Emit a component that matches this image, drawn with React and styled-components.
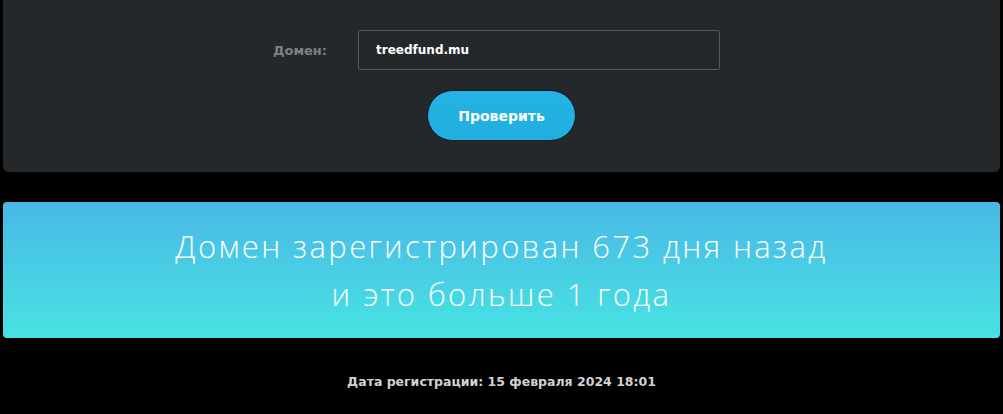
import React from 'react';
import styled, { createGlobalStyle } from 'styled-components';

const GlobalStyle = createGlobalStyle`
  html, body {
    margin: 0;
    padding: 0;
    background: #000;
    font-family: "DejaVu Sans", "Noto Sans", sans-serif;
  }
`;

const Page = styled.div`
  padding: 0 3px;
`;

const CheckPanel = styled.div`
  background: #25282b;
  border-radius: 0 0 6px 6px;
  padding: 30px 0 31px;
  display: flex;
  flex-direction: column;
  align-items: center;
  gap: 20px;
`;

const FieldRow = styled.div`
  display: flex;
  align-items: center;
  gap: 31px;
  padding-right: 10px;
`;

const Label = styled.label`
  color: #7b8087;
  font-size: 13px;
  font-weight: 600;
`;

const DomainInput = styled.input`
  box-sizing: border-box;
  width: 362px;
  height: 40px;
  background: #25282b;
  border: 1px solid #56595c;
  border-radius: 2px;
  padding: 0 17px;
  color: #fff;
  font-family: inherit;
  font-size: 12px;
  font-weight: 700;
  outline: none;
`;

const CheckButton = styled.button`
  width: 149px;
  height: 51px;
  border-radius: 26px;
  border: 1px solid #0c1822;
  background: linear-gradient(180deg, #25b2e4 0%, #20b0e0 100%);
  color: #fff;
  font-family: inherit;
  font-size: 14px;
  font-weight: 700;
  cursor: pointer;
`;

const ResultCard = styled.div`
  margin-top: 30px;
  height: 136px;
  border-radius: 4px;
  background: linear-gradient(180deg, #4ab8e6 0%, #47e3e2 100%);
  display: flex;
  flex-direction: column;
  align-items: center;
  justify-content: center;
  color: #fff;
  font-family: "Open Sans", "DejaVu Sans", sans-serif;
  font-size: 31px;
  font-weight: 300;
  letter-spacing: 2.4px;
  line-height: 48px;
`;

const DateLine = styled.div`
  text-align: center;
  color: #d2d2d2;
  font-size: 12.5px;
  font-weight: 700;
  margin-top: 36px;
`;

export default function App() {
  return (
    <Page>
      <GlobalStyle />
      <CheckPanel>
        <FieldRow>
          <Label>Домен:</Label>
          <DomainInput defaultValue="treedfund.mu" />
        </FieldRow>
        <CheckButton>Проверить</CheckButton>
      </CheckPanel>
      <ResultCard>
        <div>Домен зарегистрирован 673 дня назад</div>
        <div>и это больше 1 года</div>
      </ResultCard>
      <DateLine>Дата регистрации: 15 февраля 2024 18:01</DateLine>
    </Page>
  );
}
